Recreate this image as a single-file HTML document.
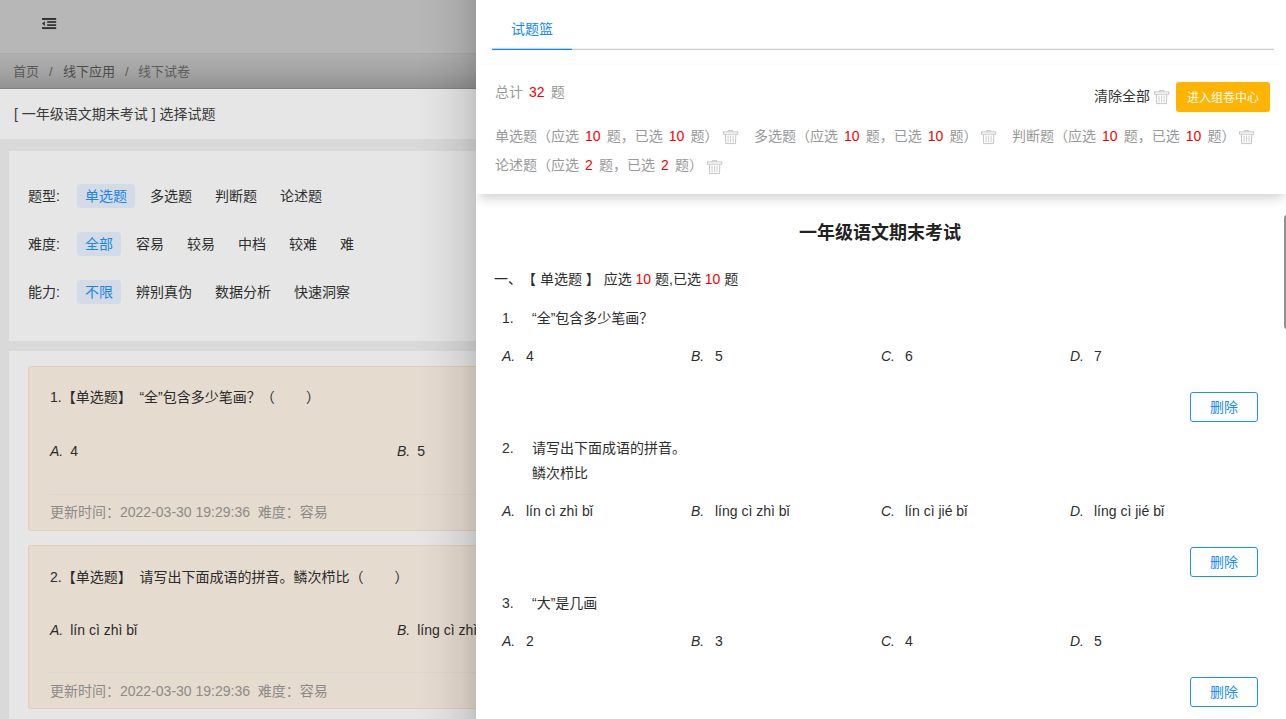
<!DOCTYPE html>
<html lang="zh-CN">
<head>
<meta charset="utf-8">
<title>选择试题</title>
<style>
*{box-sizing:border-box;margin:0;padding:0}
html,body{width:1286px;height:719px;overflow:hidden}
body{font-family:"Liberation Sans","Noto Sans CJK SC",sans-serif;font-size:14px;color:#303133;background:#d9d9d9;position:relative;text-spacing-trim:space-all}
.abs{position:absolute}
/* ---------- dimmed page behind drawer ---------- */
#navbar{left:0;top:0;width:1286px;height:54px;background:#b7b7b7;border-bottom:1px solid #ababab}
#tags{left:0;top:54px;width:1286px;height:35px;background:linear-gradient(#b0b0b0,#a4a4a4 50%,#929292);border-bottom:1px solid #838383}
#tags span{position:absolute;top:0;line-height:35px;font-size:13px;color:#585858;white-space:nowrap}
#ptitle{left:0;top:89px;width:1286px;height:50px;background:#e6e6e6;line-height:50px;padding-left:14px;font-size:14px;color:#3a3a3a;white-space:nowrap}
#filter{left:9px;top:151px;width:1270px;height:190px;background:#e6e6e6}
.frow{position:absolute;left:0;height:24px;line-height:24px;white-space:nowrap;font-size:14px;color:#2e2e2e}
.frow b{font-weight:normal;position:absolute;left:19px;top:0}
.frow i{font-style:normal;position:absolute;top:0;height:24px;padding:0 8px;border-radius:3px}
.frow i.on{background:#d3dce6;color:#1c84e8}
#list{left:9px;top:351px;width:1270px;height:380px;background:#e6e6e6}
.qcard{position:absolute;left:19px;width:1230px;height:164px;background:#e6dbcf;border:1px solid #e3cdb4;border-radius:3px}
.qcard .t{position:absolute;left:21px;top:18px;line-height:24px;font-size:14px;color:#2b2b2b;white-space:nowrap}
.qcard .o{position:absolute;top:72px;line-height:24px;font-size:14px;color:#2b2b2b;white-space:nowrap}
.qcard .o em{margin-right:7px}
.qcard .ln{position:absolute;left:21px;right:21px;top:127px;height:1px;background:#ddd7d0}
.qcard .f{position:absolute;left:21px;top:133px;line-height:24px;font-size:14px;color:#8c8a88;white-space:nowrap}
/* ---------- drawer ---------- */
#shadow{left:416px;top:0;width:60px;height:719px;background:linear-gradient(to right,rgba(0,0,0,0),rgba(0,0,0,.025) 35%,rgba(0,0,0,.08) 75%,rgba(0,0,0,.15))}
#drawer{left:476px;top:0;width:810px;height:719px;background:#fff;overflow:hidden}
#tabtxt{left:35px;top:18px;font-size:14px;line-height:22px;color:#1389fb}
#tabline{left:16px;top:48px;width:782px;height:2px;background:linear-gradient(rgba(204,204,204,.22) 50%,#cbcbcb 50%)}
#tabbar{left:16px;top:48px;width:80px;height:2px;background:linear-gradient(#b3d9ff 50%,#0a86ff 50%)}
#sticky{left:0;top:65px;width:810px;height:129px;background:#fff;box-shadow:0 7px 11px -3px rgba(0,0,0,.19),0 -2px 3px rgba(0,0,0,.012)}
.g{color:#999;font-size:14px;white-space:nowrap;line-height:22px}
.r{color:#f50000;margin:0 2.2px}
.r0{color:#f50000}
.trash{position:absolute;width:16px;height:15px}
#gobtn{left:700px;top:82px;width:94px;height:30px;background:#ffb400;border-radius:3px;color:#fff;font-size:12px;line-height:32px;text-align:center;white-space:nowrap}
#ttl{left:0;top:219px;width:810px;text-align:center;font-size:18px;font-weight:bold;line-height:28px;color:#222;padding-right:2px}
.q{color:#2e2e2e;font-size:14px;line-height:22px;white-space:nowrap}
.q em{font-style:italic}
.del{width:68px;height:30px;border:1px solid #1890ff;border-radius:3px;color:#1a8cf8;font-size:14px;line-height:28px;text-align:center;background:#fff}
#sb{left:808px;top:215px;width:6px;height:114px;border-radius:3px;background:#8e8f94}
</style>
</head>
<body>
<!-- dimmed page -->
<div id="navbar" class="abs">
  <svg class="abs" style="left:42px;top:18px" width="15" height="12" viewBox="0 0 15 12"><rect x="0" y="0" width="14.2" height="1.9" fill="#303030"/><rect x="5.2" y="3.15" width="9" height="1.7" fill="#303030"/><rect x="5.2" y="6.25" width="9" height="1.7" fill="#303030"/><rect x="0" y="9.15" width="14.2" height="1.9" fill="#303030"/><path d="M0 5.55 L2.9 3.15 V7.95 Z" fill="#303030"/></svg>
</div>
<div id="tags" class="abs">
  <span style="left:13px">首页</span><span style="left:49px">/</span><span style="left:63px;color:#4c4c4c">线下应用</span><span style="left:125px">/</span><span style="left:138px;color:#5c5c5c">线下试卷</span>
</div>
<div id="ptitle" class="abs">[ 一年级语文期末考试 ] 选择试题</div>
<div id="filter" class="abs">
  <div class="frow" style="top:33px"><b>题型:</b><i class="on" style="left:68px">单选题</i><i style="left:133px">多选题</i><i style="left:198px">判断题</i><i style="left:263px">论述题</i></div>
  <div class="frow" style="top:81px"><b>难度:</b><i class="on" style="left:68px">全部</i><i style="left:119px">容易</i><i style="left:170px">较易</i><i style="left:221px">中档</i><i style="left:272px">较难</i><i style="left:323px">难</i></div>
  <div class="frow" style="top:129px"><b>能力:</b><i class="on" style="left:68px">不限</i><i style="left:119px">辨别真伪</i><i style="left:198px">数据分析</i><i style="left:277px">快速洞察</i></div>
</div>
<div id="list" class="abs">
  <div class="qcard" style="top:15px;height:165px">
    <div class="t">1.【单选题】&nbsp; “全”包含多少笔画？（&nbsp;&nbsp;&nbsp;&nbsp;&nbsp;&nbsp;&nbsp;&nbsp;）</div>
    <div class="o" style="left:21px"><em>A.</em>4</div><div class="o" style="left:368px"><em>B.</em>5</div>
    <div class="ln"></div>
    <div class="f">更新时间：2022-03-30 19:29:36&nbsp; 难度：容易</div>
  </div>
  <div class="qcard" style="top:194px">
    <div class="t" style="top:19px">2.【单选题】&nbsp; 请写出下面成语的拼音。鳞次栉比（&nbsp;&nbsp;&nbsp;&nbsp;&nbsp;&nbsp;&nbsp;&nbsp;）</div>
    <div class="o" style="left:21px"><em>A.</em>lín cì zhì bǐ</div><div class="o" style="left:368px"><em>B.</em>líng cì zhì bǐ</div>
    <div class="ln" style="top:126px"></div>
    <div class="f">更新时间：2022-03-30 19:29:36&nbsp; 难度：容易</div>
  </div>
</div>
<div id="shadow" class="abs"></div>
<!-- drawer -->
<div id="drawer" class="abs">
  <div id="tabtxt" class="abs">试题篮</div>
  <div id="tabline" class="abs"></div>
  <div id="tabbar" class="abs"></div>
  <!-- paper body -->
  <div id="ttl" class="abs">一年级语文期末考试</div>
  <div class="q abs" style="left:18px;top:268px">一、【 单选题 】 应选 <span class="r0">10</span> 题,已选 <span class="r0">10</span> 题</div>

  <div class="q abs" style="left:26px;top:307px">1.</div><div class="q abs" style="left:56px;top:307px">“全”包含多少笔画？</div>
  <div class="q abs" style="left:26px;top:345px"><em>A.</em></div><div class="q abs" style="left:50px;top:345px">4</div>
  <div class="q abs" style="left:215px;top:345px"><em>B.</em></div><div class="q abs" style="left:239px;top:345px">5</div>
  <div class="q abs" style="left:405px;top:345px"><em>C.</em></div><div class="q abs" style="left:429px;top:345px">6</div>
  <div class="q abs" style="left:594px;top:345px"><em>D.</em></div><div class="q abs" style="left:618px;top:345px">7</div>
  <div class="del abs" style="left:714px;top:392px">删除</div>

  <div class="q abs" style="left:26px;top:437px">2.</div><div class="q abs" style="left:56px;top:437px">请写出下面成语的拼音。</div>
  <div class="q abs" style="left:56px;top:462px">鳞次栉比</div>
  <div class="q abs" style="left:26px;top:500px"><em>A.</em></div><div class="q abs" style="left:50px;top:500px">lín cì zhì bǐ</div>
  <div class="q abs" style="left:215px;top:500px"><em>B.</em></div><div class="q abs" style="left:239px;top:500px">líng cì zhì bǐ</div>
  <div class="q abs" style="left:405px;top:500px"><em>C.</em></div><div class="q abs" style="left:429px;top:500px">lín cì jié bǐ</div>
  <div class="q abs" style="left:594px;top:500px"><em>D.</em></div><div class="q abs" style="left:618px;top:500px">líng cì jié bǐ</div>
  <div class="del abs" style="left:714px;top:547px">删除</div>

  <div class="q abs" style="left:26px;top:592px">3.</div><div class="q abs" style="left:56px;top:592px">“大”是几画</div>
  <div class="q abs" style="left:26px;top:630px"><em>A.</em></div><div class="q abs" style="left:50px;top:630px">2</div>
  <div class="q abs" style="left:215px;top:630px"><em>B.</em></div><div class="q abs" style="left:239px;top:630px">3</div>
  <div class="q abs" style="left:405px;top:630px"><em>C.</em></div><div class="q abs" style="left:429px;top:630px">4</div>
  <div class="q abs" style="left:594px;top:630px"><em>D.</em></div><div class="q abs" style="left:618px;top:630px">5</div>
  <div class="del abs" style="left:714px;top:677px">删除</div>

  <!-- sticky summary -->
  <div id="sticky" class="abs"></div>
  <div class="g abs" style="left:19px;top:81px">总计 <span class="r">32</span> 题</div>
  <div class="abs" style="left:618px;top:85px;font-size:14px;line-height:22px;color:#333;white-space:nowrap">清除全部</div>
  <svg class="trash" style="left:677.5px;top:89.5px" viewBox="0 0 16 15"><g fill="none" stroke="#c6c6c6" stroke-width="1"><path d="M5.6 1.9V.6h4.2v1.3"/><rect x=".5" y="1.9" width="14.2" height="2.3"/><path d="M2.4 4.2l.3 9.4h9.8l.3-9.4"/><path d="M5.1 5.6v6.8M7.6 5.6v6.8M10.1 5.6v6.8" stroke-width=".9"/></g></svg>
  <div id="gobtn" class="abs">进入组卷中心</div>
  <div class="g abs" style="left:19px;top:125px">单选题（应选 <span class="r">10</span> 题，已选 <span class="r">10</span> 题）</div>
  <svg class="trash" style="left:247px;top:129.5px" viewBox="0 0 16 15"><g fill="none" stroke="#c6c6c6" stroke-width="1"><path d="M5.6 1.9V.6h4.2v1.3"/><rect x=".5" y="1.9" width="14.2" height="2.3"/><path d="M2.4 4.2l.3 9.4h9.8l.3-9.4"/><path d="M5.1 5.6v6.8M7.6 5.6v6.8M10.1 5.6v6.8" stroke-width=".9"/></g></svg>
  <div class="g abs" style="left:278px;top:125px">多选题（应选 <span class="r">10</span> 题，已选 <span class="r">10</span> 题）</div>
  <svg class="trash" style="left:504.5px;top:129.5px" viewBox="0 0 16 15"><g fill="none" stroke="#c6c6c6" stroke-width="1"><path d="M5.6 1.9V.6h4.2v1.3"/><rect x=".5" y="1.9" width="14.2" height="2.3"/><path d="M2.4 4.2l.3 9.4h9.8l.3-9.4"/><path d="M5.1 5.6v6.8M7.6 5.6v6.8M10.1 5.6v6.8" stroke-width=".9"/></g></svg>
  <div class="g abs" style="left:536px;top:125px">判断题（应选 <span class="r">10</span> 题，已选 <span class="r">10</span> 题）</div>
  <svg class="trash" style="left:763px;top:129.5px" viewBox="0 0 16 15"><g fill="none" stroke="#c6c6c6" stroke-width="1"><path d="M5.6 1.9V.6h4.2v1.3"/><rect x=".5" y="1.9" width="14.2" height="2.3"/><path d="M2.4 4.2l.3 9.4h9.8l.3-9.4"/><path d="M5.1 5.6v6.8M7.6 5.6v6.8M10.1 5.6v6.8" stroke-width=".9"/></g></svg>
  <div class="g abs" style="left:19px;top:154px">论述题（应选 <span class="r">2</span> 题，已选 <span class="r">2</span> 题）</div>
  <svg class="trash" style="left:231px;top:159.5px" viewBox="0 0 16 15"><g fill="none" stroke="#c6c6c6" stroke-width="1"><path d="M5.6 1.9V.6h4.2v1.3"/><rect x=".5" y="1.9" width="14.2" height="2.3"/><path d="M2.4 4.2l.3 9.4h9.8l.3-9.4"/><path d="M5.1 5.6v6.8M7.6 5.6v6.8M10.1 5.6v6.8" stroke-width=".9"/></g></svg>
  <div id="sb" class="abs"></div>
</div>

</body>
</html>
